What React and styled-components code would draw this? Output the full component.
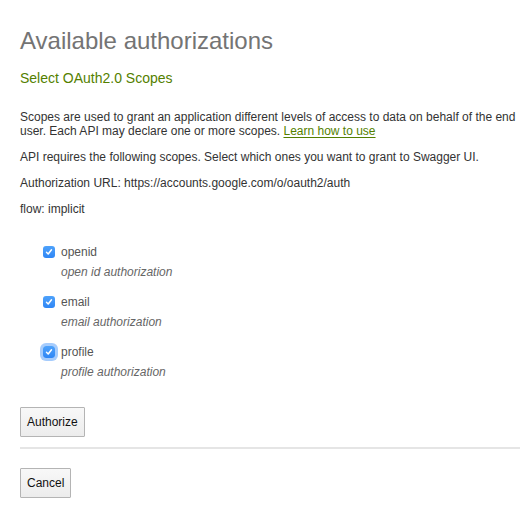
import styled, { createGlobalStyle } from 'styled-components';

const GlobalStyle = createGlobalStyle`
    html, body {
        margin: 0;
        padding: 0;
        background: #fff;
    }
    body {
        font-family: "Liberation Sans", Arial, Helvetica, sans-serif;
        color: #333;
    }
`;

const Dialog = styled.div`
    padding: 27px 8px 20px 20px;
`;

const Title = styled.h1`
    margin: 0;
    font-size: 24px;
    line-height: 28px;
    font-weight: normal;
    color: #747474;
`;

const Subtitle = styled.h4`
    margin: 15px 0 24px;
    font-size: 14px;
    line-height: 16px;
    font-weight: normal;
    color: #547f00;
`;

const Text = styled.p`
    margin: 0 0 12px;
    font-size: 12px;
    line-height: 14px;
    color: #333;
`;

const GreenLink = styled.a`
    color: #547f00;
    text-decoration: underline;
    text-decoration-thickness: 1px;
    text-underline-offset: 2px;
`;

const ScopeList = styled.ul`
    list-style: none;
    margin: 26px 0 25px;
    padding: 0 0 0 23px;
`;

const Scope = styled.li`
    margin-bottom: 10px;

    &:last-child {
        margin-bottom: 0;
    }
`;

const ScopeRow = styled.label`
    display: flex;
    align-items: center;
    gap: 6px;
    height: 20px;
    font-size: 12px;
    color: #555;
`;

const Box = styled.span`
    width: 12px;
    height: 12px;
    border-radius: 3px;
    background: linear-gradient(#4ea2fb, #2f86f5);
    display: flex;
    align-items: center;
    justify-content: center;
    flex-shrink: 0;
    box-shadow: ${({ $focused }) =>
        $focused ? '0 0 0 3px rgba(92, 163, 250, 0.55)' : 'none'};
`;

const Description = styled.div`
    padding-left: 18px;
    font-size: 12px;
    line-height: 20px;
    font-style: italic;
    color: #666;
`;

const Button = styled.button`
    display: block;
    height: 30px;
    padding: 0 6px;
    border: 1px solid #b4b4b4;
    border-radius: 1px;
    background: linear-gradient(#f8f8f8, #ececec);
    font-family: "Liberation Sans", Arial, Helvetica, sans-serif;
    font-size: 12px;
    color: #111;
    cursor: pointer;
`;

const Divider = styled.hr`
    height: 2px;
    border: none;
    background: #e5e5e5;
    margin: 10px 0 19px;
`;

const Check = () => (
    <svg width="8" height="8" viewBox="0 0 8 8">
        <path d="M1.5 4.3 L3.2 6 L6.5 1.8" fill="none" stroke="#fff" strokeWidth="1.5" strokeLinecap="round" strokeLinejoin="round" />
    </svg>
);

const scopes = [
    { name: 'openid', description: 'open id authorization' },
    { name: 'email', description: 'email authorization' },
    { name: 'profile', description: 'profile authorization', focused: true },
];

const App = () => {
    return (
        <>
            <GlobalStyle />
            <Dialog>
                <Title>Available authorizations</Title>
                <Subtitle>Select OAuth2.0 Scopes</Subtitle>
                <Text>
                    Scopes are used to grant an application different levels of access to data on behalf of the end
                    user. Each API may declare one or more scopes. <GreenLink href="#">Learn how to use</GreenLink>
                </Text>
                <Text>API requires the following scopes. Select which ones you want to grant to Swagger UI.</Text>
                <Text>Authorization URL: https://accounts.google.com/o/oauth2/auth</Text>
                <Text>flow: implicit</Text>

                <ScopeList>
                    {scopes.map((scope) => (
                        <Scope key={scope.name}>
                            <ScopeRow>
                                <Box $focused={scope.focused}>
                                    <Check />
                                </Box>
                                {scope.name}
                            </ScopeRow>
                            <Description>{scope.description}</Description>
                        </Scope>
                    ))}
                </ScopeList>

                <Button>Authorize</Button>
                <Divider />
                <Button>Cancel</Button>
            </Dialog>
        </>
    );
};

export default App;
